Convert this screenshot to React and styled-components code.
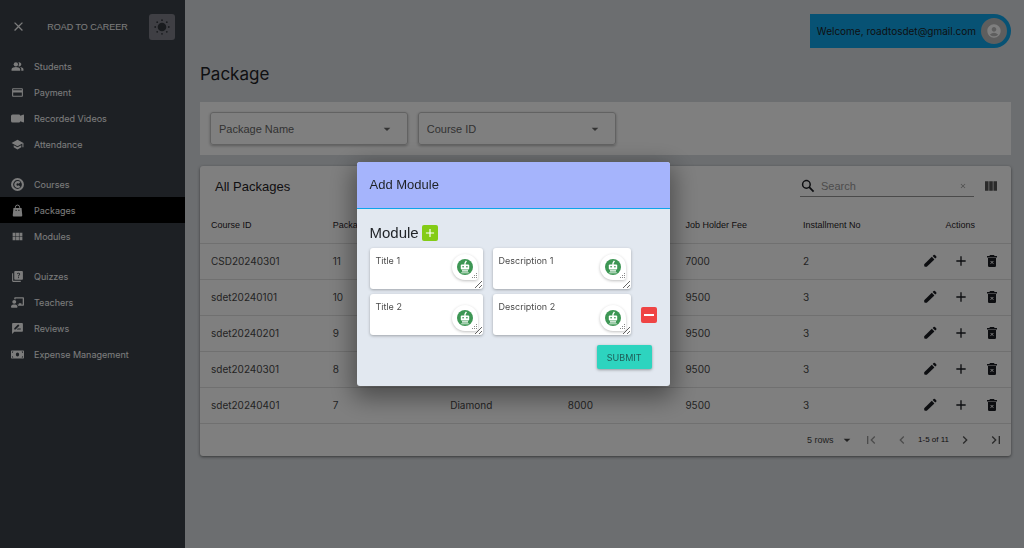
import React, { useState } from "react"
import styled, { createGlobalStyle } from "styled-components"
import {
  MdClose,
  MdPeopleAlt,
  MdPayment,
  MdSchool,
  MdViewModule,
  MdQuiz,
  MdRateReview,
  MdArrowDropDown,
  MdViewColumn,
  MdAdd,
  MdFirstPage,
  MdChevronLeft,
  MdChevronRight,
  MdLastPage,
  MdAccountCircle,
} from "react-icons/md"
import { BsCameraVideoFill } from "react-icons/bs"
import { FaChalkboardTeacher, FaMoneyBill } from "react-icons/fa"

const menu = [
  [
    { label: "Students", icon: MdPeopleAlt },
    { label: "Payment", icon: MdPayment },
    { label: "Recorded Videos", icon: BsCameraVideoFill },
    { label: "Attendance", icon: MdSchool },
  ],
  [
    { label: "Courses", icon: CourseIcon },
    { label: "Packages", icon: BagIcon, active: true },
    { label: "Modules", icon: MdViewModule },
  ],
  [
    { label: "Quizzes", icon: MdQuiz },
    { label: "Teachers", icon: FaChalkboardTeacher },
    { label: "Reviews", icon: MdRateReview },
    { label: "Expense Management", icon: FaMoneyBill },
  ],
]

const columns = [
  "Course ID",
  "Package",
  "Name",
  "Student Fee",
  "Job Holder Fee",
  "Installment No",
]

const packages = [
  ["CSD20240301", 11, "Silver", 6000, 7000, 2],
  ["sdet20240101", 10, "Diamond", 8000, 9500, 3],
  ["sdet20240201", 9, "Diamond", 8000, 9500, 3],
  ["sdet20240301", 8, "Diamond", 8000, 9500, 3],
  ["sdet20240401", 7, "Diamond", 8000, 9500, 3],
]

function CourseIcon() {
  return (
    <svg viewBox="0 0 24 24" fill="none" stroke="currentColor">
      <circle cx="12" cy="12" r="10" strokeWidth="3.8" />
      <path d="M15.8 9.2A4.4 4.4 0 1 0 15.8 14.8" strokeWidth="4" />
    </svg>
  )
}

function BagIcon() {
  return (
    <svg viewBox="0 0 24 24" fill="currentColor">
      <path d="M4.5 7.5h15l1.3 13.2a2 2 0 0 1-2 2.2H5.2a2 2 0 0 1-2-2.2z" />
      <path
        d="M8 8V6a4 4 0 0 1 8 0v2"
        fill="none"
        stroke="currentColor"
        strokeWidth="1.8"
      />
      <path d="M8.5 10.5h1.8v2.2H8.5zM13.7 10.5h1.8v2.2h-1.8z" fill="#222" />
    </svg>
  )
}

function SunIcon() {
  return (
    <svg viewBox="0 0 16 16" width="16" height="16" fill="currentColor">
      <circle cx="8" cy="8" r="4.3" />
      <circle cx="8" cy="1.2" r="0.9" />
      <circle cx="8" cy="14.8" r="0.9" />
      <circle cx="1.2" cy="8" r="0.9" />
      <circle cx="14.8" cy="8" r="0.9" />
      <circle cx="3.2" cy="3.2" r="0.9" />
      <circle cx="12.8" cy="3.2" r="0.9" />
      <circle cx="3.2" cy="12.8" r="0.9" />
      <circle cx="12.8" cy="12.8" r="0.9" />
    </svg>
  )
}

function SearchIcon() {
  return (
    <svg viewBox="0 0 16 16" width="16" height="16" fill="none" stroke="#1b1d22">
      <circle cx="6.4" cy="6.4" r="3.8" strokeWidth="1.5" />
      <path d="M9.2 9.2L13.6 13.6" strokeWidth="1.8" />
    </svg>
  )
}

function PencilIcon() {
  return (
    <svg viewBox="0 0 16 16" width="16" height="16" fill="currentColor">
      <path d="M2.2 11.2L9.8 3.8l2.6 2.6L4.8 13.8H3.2a1 1 0 0 1-1-1z" />
      <path d="M10.6 3l1-.9a1 1 0 0 1 1.4 0l1.2 1.2a1 1 0 0 1 0 1.4l-1 .9z" />
    </svg>
  )
}

function TrashIcon() {
  return (
    <svg viewBox="0 0 16 16" width="16" height="16" fill="currentColor">
      <path d="M6 2h4l.6 1H13v1.4H3V3h2.4z" />
      <path d="M4 5h8v7.8a1.2 1.2 0 0 1-1.2 1.2H5.2A1.2 1.2 0 0 1 4 12.8z" />
      <path d="M6.6 8l2.8 2.8M9.4 8l-2.8 2.8" stroke="#fff" strokeWidth="1" />
    </svg>
  )
}

function RobotIcon() {
  return (
    <svg viewBox="0 0 16 16" width="16" height="16">
      <circle cx="8" cy="8" r="8" fill="#3d9654" />
      <path d="M8 6V4.2L9.4 1.8" stroke="#fff" strokeWidth="1.3" fill="none" />
      <rect x="3.8" y="5.4" width="8.4" height="5" rx="1" fill="#fff" />
      <rect x="5.4" y="7" width="1.4" height="1.4" fill="#3d9654" />
      <rect x="9.2" y="7" width="1.4" height="1.4" fill="#3d9654" />
      <path d="M5 11.2h6v1.2H5z" fill="#fff" />
      <path d="M4.2 13.8h7.6" stroke="#d5ead9" strokeWidth="1" />
    </svg>
  )
}

function GripIcon() {
  return (
    <svg viewBox="0 0 7 7" width="7" height="7" fill="#888">
      <path d="M5 0h1v1H5zM3 2h1v1H3zM5 2h1v1H5zM1 4h1v1H1zM3 4h1v1H3zM5 4h1v1H5z" />
    </svg>
  )
}

function Field({ label, low }) {
  return (
    <FieldBox>
      <Area aria-label={label} defaultValue={label} />
      <Helper $low={low}>
        <RobotIcon />
        <Grip>
          <GripIcon />
        </Grip>
      </Helper>
    </FieldBox>
  )
}

function Sidebar() {
  return (
    <Side>
      <SideTop>
        <IconButton aria-label="Close menu">
          <MdClose size={15} />
        </IconButton>
        <Brand>ROAD TO CAREER</Brand>
        <ThemeButton aria-label="Toggle theme">
          <SunIcon />
        </ThemeButton>
      </SideTop>
      <Nav>
        {menu.map((group, i) => (
          <Group key={i}>
            {group.map(({ label, icon: Icon, active }) => (
              <NavLink href="#" key={label} $active={active}>
                <Icon />
                {label}
              </NavLink>
            ))}
          </Group>
        ))}
      </Nav>
    </Side>
  )
}

function PackageTable() {
  return (
    <Card>
      <Toolbar>
        <CardTitle>All Packages</CardTitle>
        <SearchBox>
          <SearchIcon />
          <SearchInput placeholder="Search" aria-label="Search" />
          <ClearButton aria-label="Clear search">
            <MdClose size={8} />
          </ClearButton>
        </SearchBox>
        <IconButton $muted aria-label="Show columns">
          <MdViewColumn size={16} />
        </IconButton>
      </Toolbar>
      <Table>
        <thead>
          <tr>
            {columns.map((name, i) => (
              <Th key={name} $first={i === 0}>
                {name}
              </Th>
            ))}
            <ActionsTh>Actions</ActionsTh>
          </tr>
        </thead>
        <tbody>
          {packages.map(row => (
            <tr key={row[0]}>
              {row.map((value, i) => (
                <Td key={i}>{value}</Td>
              ))}
              <Td>
                <Actions>
                  <IconButton aria-label="Edit">
                    <PencilIcon />
                  </IconButton>
                  <IconButton aria-label="Add module">
                    <MdAdd size={16} />
                  </IconButton>
                  <IconButton aria-label="Delete">
                    <TrashIcon />
                  </IconButton>
                </Actions>
              </Td>
            </tr>
          ))}
        </tbody>
      </Table>
      <Pager>
        <RowsBox>
          <RowsSelect aria-label="Rows per page" defaultValue="5">
            <option value="5">5 rows</option>
            <option value="10">10 rows</option>
          </RowsSelect>
          <MdArrowDropDown size={16} />
        </RowsBox>
        <PageButtons>
          <IconButton $faded aria-label="First page">
            <MdFirstPage size={16} />
          </IconButton>
          <IconButton $faded aria-label="Previous page">
            <MdChevronLeft size={16} />
          </IconButton>
        </PageButtons>
        <PageInfo>1-5 of 11</PageInfo>
        <PageButtons>
          <IconButton $muted aria-label="Next page">
            <MdChevronRight size={16} />
          </IconButton>
          <IconButton $muted aria-label="Last page">
            <MdLastPage size={16} />
          </IconButton>
        </PageButtons>
      </Pager>
    </Card>
  )
}

function AddModule() {
  const [count, setCount] = useState(2)

  return (
    <Overlay>
      <Dialog role="dialog" aria-modal="true" aria-labelledby="dialog-title">
        <DialogTitle id="dialog-title">Add Module</DialogTitle>
        <DialogBody>
          <ModuleHead>
            <h3>Module</h3>
            <SquareButton
              $color="#84cc16"
              aria-label="Add row"
              onClick={() => setCount(count + 1)}
            >
              <MdAdd size={14} />
            </SquareButton>
          </ModuleHead>
          {Array.from({ length: count }, (_, i) => (
            <ModuleRow key={i}>
              <Field label={`Title ${i + 1}`} low={i > 0} />
              <Field label={`Description ${i + 1}`} low={i > 0} />
              {i > 0 && (
                <SquareButton
                  $color="#ef4444"
                  aria-label="Remove row"
                  onClick={() => setCount(count - 1)}
                >
                  <Minus />
                </SquareButton>
              )}
            </ModuleRow>
          ))}
          <Submit type="submit">SUBMIT</Submit>
        </DialogBody>
      </Dialog>
    </Overlay>
  )
}

function App() {
  return (
    <>
      <GlobalStyle />
      <Page>
        <Sidebar />
        <Main>
          <Welcome>
            Welcome, roadtosdet@gmail.com
            <Avatar>
              <MdAccountCircle size={16} />
            </Avatar>
          </Welcome>
          <Title>Package</Title>
          <Filters>
            {["Package Name", "Course ID"].map(name => (
              <SelectBox key={name}>
                <Select aria-label={name}>
                  <option>{name}</option>
                </Select>
                <MdArrowDropDown size={16} />
              </SelectBox>
            ))}
          </Filters>
          <PackageTable />
        </Main>
      </Page>
      <AddModule />
    </>
  )
}

export default App

const GlobalStyle = createGlobalStyle`
  * {
    box-sizing: border-box;
  }
  body {
    margin: 0;
    font-family: Inter, sans-serif;
    font-size: 9px;
    color: #1f2226;
  }
  button,
  input,
  select,
  textarea {
    font-family: inherit;
    font-size: inherit;
    color: inherit;
  }
`
const Page = styled.div`
  display: grid;
  grid-template-columns: 185px 1fr;
  min-height: 100vh;
  background: #d8dce0;
`
const Side = styled.aside`
  background: #3a4149;
  color: #f8f8f8;
`
const SideTop = styled.div`
  display: flex;
  align-items: center;
  justify-content: space-between;
  height: 53px;
  padding: 0 10px 0 11px;
`
const Brand = styled.span`
  font-family: "Liberation Sans", sans-serif;
`
const IconButton = styled.button`
  display: inline-flex;
  padding: 0;
  border: 0;
  background: none;
  cursor: pointer;
  color: ${p => (p.$faded ? "#999" : p.$muted ? "#555" : "inherit")};
`
const ThemeButton = styled(IconButton)`
  align-items: center;
  justify-content: center;
  width: 26px;
  height: 26px;
  border-radius: 3px;
  background: #7e7e88;
  color: #33373d;
`
const Nav = styled.nav`
  display: flex;
  flex-direction: column;
  gap: 14px;
`
const Group = styled.div`
  display: flex;
  flex-direction: column;
`
const NavLink = styled.a`
  display: flex;
  align-items: center;
  gap: 10px;
  height: 26px;
  padding: 0 11px;
  background: ${p => (p.$active ? "#000" : "transparent")};
  color: inherit;
  text-decoration: none;

  svg {
    width: 13px;
    height: 13px;
  }
`
const Main = styled.main`
  display: flex;
  flex-direction: column;
  padding: 14px 13px 14px 15px;
`
const Welcome = styled.div`
  display: flex;
  align-items: center;
  align-self: flex-end;
  gap: 5px;
  height: 34px;
  padding: 0 4px 0 7px;
  border-radius: 0 17px 17px 0;
  background: #0ea5e9;
  font-size: 10px;
`
const Avatar = styled.span`
  display: flex;
  align-items: center;
  justify-content: center;
  width: 26px;
  height: 26px;
  border-radius: 50%;
  background: #bdbdbd;
  color: #fff;
`
const Title = styled.h1`
  margin: 14px 0 16px;
  font-size: 17px;
  font-weight: 400;
  line-height: 24px;
`
const Filters = styled.section`
  display: flex;
  gap: 10px;
  margin-bottom: 11px;
  padding: 10px;
  background: #fff;
`
const SelectBox = styled.div`
  display: flex;
  align-items: center;
  width: 25%;
  height: 33px;
  padding-right: 12px;
  border: 1px solid #c4c4c4;
  border-radius: 3px;
  box-shadow: 0 1px 3px rgba(0, 0, 0, 0.3);
  color: #666;
`
const Select = styled.select`
  flex: 1;
  height: 100%;
  padding: 0 8px;
  border: 0;
  background: none;
  appearance: none;
  font-family: "Liberation Sans", sans-serif;
  font-size: 11px;
`
const Card = styled.section`
  border-radius: 3px;
  background: #fff;
  box-shadow: 0 1px 3px rgba(0, 0, 0, 0.5);
`
const Toolbar = styled.div`
  display: flex;
  align-items: center;
  gap: 9px;
  height: 40px;
  padding: 0 12px 0 15px;
`
const CardTitle = styled.h2`
  flex: 1;
  margin: 0;
  font-family: "Liberation Sans", sans-serif;
  font-size: 13px;
  font-weight: 400;
`
const SearchBox = styled.div`
  display: flex;
  align-items: center;
  gap: 5px;
  width: 174px;
  height: 22px;
  border-bottom: 1px solid #949494;
`
const SearchInput = styled.input`
  flex: 1;
  min-width: 0;
  padding: 0;
  border: 0;
  outline: 0;
  background: none;
  font-family: "Liberation Sans", sans-serif;
  font-size: 11px;

  &::placeholder {
    color: #999;
  }
`
const ClearButton = styled(IconButton)`
  padding-right: 7px;
  color: #999;
`
const Table = styled.table`
  width: 100%;
  table-layout: fixed;
  border-collapse: collapse;
`
const Th = styled.th`
  width: ${p => (p.$first ? "15%" : "14.5%")};
  height: 37px;
  padding: 1px 11px 0;
  border-bottom: 1px solid #e0e0e0;
  font-family: "Liberation Sans", sans-serif;
  font-weight: 400;
  text-align: left;
`
const ActionsTh = styled(Th)`
  width: auto;
  padding: 1px 0 0;
  text-align: center;
`
const Td = styled.td`
  height: 36px;
  padding: 0 11px;
  border-bottom: 1px solid #e0e0e0;
  font-size: 10px;
  color: #484848;
`
const Actions = styled.div`
  display: flex;
  justify-content: flex-end;
  gap: 15px;
  color: #1b1d22;
`
const Pager = styled.div`
  display: flex;
  align-items: center;
  justify-content: flex-end;
  gap: 8px;
  height: 32px;
  padding: 0 7px;
  font-family: "Liberation Sans", sans-serif;
`
const PageButtons = styled.div`
  display: flex;
  gap: 15px;
`
const RowsBox = styled.div`
  display: flex;
  align-items: center;
  color: #444;
`
const RowsSelect = styled.select`
  padding: 0;
  border: 0;
  background: none;
  appearance: none;
`
const PageInfo = styled.span`
  font-size: 8px;
`
const Overlay = styled.div`
  position: fixed;
  inset: 0;
  display: flex;
  align-items: center;
  justify-content: center;
  padding: 16px 14px 16px 16px;
  background: rgba(0, 0, 0, 0.5);
`
const Dialog = styled.div`
  width: 313px;
  border-radius: 3px;
  overflow: hidden;
  background: #e2e8f0;
  box-shadow: 0 8px 24px 4px rgba(0, 0, 0, 0.4);
`
const DialogTitle = styled.h2`
  margin: 0;
  padding: 12px 13px 13px;
  border-bottom: 1px solid #0ea5e9;
  background: #a5b4fc;
  font-family: "Liberation Sans", sans-serif;
  font-size: 13px;
  font-weight: 400;
  line-height: 21px;
`
const DialogBody = styled.div`
  display: flex;
  flex-direction: column;
  gap: 5px;
  padding: 13px 13px 17px;
`
const ModuleHead = styled.div`
  display: flex;
  align-items: center;
  gap: 3px;
  height: 21px;

  h3 {
    margin: 0;
    font-family: "Liberation Sans", sans-serif;
    font-size: 15px;
    font-weight: 400;
    line-height: 16px;
  }
`
const SquareButton = styled.button`
  display: flex;
  align-items: center;
  justify-content: center;
  width: 16px;
  height: 16px;
  padding: 0;
  border: 0;
  border-radius: 2px;
  background: ${p => p.$color};
  color: #fff;
`
const Minus = styled.span`
  width: 10px;
  height: 2px;
  background: #fff;
`
const ModuleRow = styled.div`
  display: grid;
  grid-template-columns: 113px 138px 16px;
  align-items: center;
  gap: 10px;
`
const FieldBox = styled.div`
  position: relative;
  display: flex;
`
const Area = styled.textarea`
  width: 100%;
  height: 41px;
  padding: 7px 6px;
  border: 0;
  border-radius: 3px;
  box-shadow: 0 1px 3px rgba(0, 0, 0, 0.3);
  background: #fff;
  color: #4b4b4b;
`
const Helper = styled.span`
  position: absolute;
  right: 5px;
  bottom: ${p => (p.$low ? "4px" : "9px")};
  display: flex;
  align-items: center;
  justify-content: center;
  width: 26px;
  height: 26px;
  border-radius: 13px 13px 3px 13px;
  background: #fff;
  box-shadow: 0 1px 3px rgba(0, 0, 0, 0.25);
`
const Grip = styled.span`
  position: absolute;
  right: 0;
  bottom: 0;
  display: flex;
`
const Submit = styled.button`
  align-self: flex-end;
  height: 24px;
  margin: 5px 5px 0 0;
  padding: 0 10px;
  border: 0;
  border-radius: 2px;
  background: #2dd4bf;
  box-shadow: 0 1px 3px rgba(0, 0, 0, 0.35);
  color: #1f5d58;
`
